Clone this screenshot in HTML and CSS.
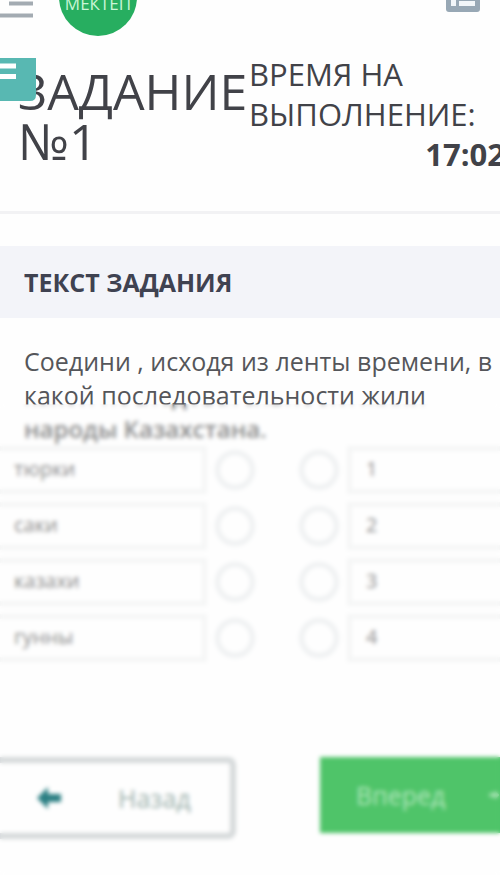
FILE: index.html
```html
<!DOCTYPE html>
<html lang="ru">
<head>
  <meta charset="UTF-8">
  <meta name="viewport" content="width=device-width, initial-scale=1">
  <title>Задание №1</title>
  <link rel="stylesheet" href="styles.css">
</head>
<body>
  <header class="topbar">
    <button class="icon-btn menu-btn" type="button" aria-label="Меню">
      <svg width="34" height="18" viewBox="0 0 34 18">
        <path d="M9 3.500H33M0 15.500H33" stroke="#a3abb2" stroke-width="4"/>
      </svg>
    </button>
    <a class="logo" href="#">МЕКТЕП</a>
    <button class="icon-btn list-btn" type="button" aria-label="Список заданий">
      <svg width="34" height="26" viewBox="0 0 34 26">
        <rect width="34" height="26" rx="3" fill="#98a8b5"/>
        <path d="M5 7H10V20H5zM13 7H29V12H13zM13 15H29V20H13z" fill="#f2f6f9"/>
      </svg>
    </button>
  </header>

  <main>
    <section class="task-head">
      <button class="side-tab" type="button" aria-label="Открыть панель">
        <svg width="36" height="44" viewBox="0 0 36 44">
          <path d="M0 0H36V37Q36 43 30 43H0z" fill="#58b8b2"/>
          <path d="M0 8H16M0 18.500H16" stroke="#fff" stroke-width="5"/>
        </svg>
      </button>
      <h1 class="task-title">ЗАДАНИЕ №1</h1>
      <div class="timer">
        <span class="timer-label">ВРЕМЯ НА ВЫПОЛНЕНИЕ:</span>
        <strong class="timer-value">17:02</strong>
      </div>
    </section>

    <h2 class="section-title">ТЕКСТ ЗАДАНИЯ</h2>
    <p class="question">Соедини , исходя из ленты времени, в какой последовательности жили <span class="last-line">народы Казахстана.</span></p>

    <section class="hidden-area">
      <div class="pairs">
        <div class="pair">
          <label class="option" for="l1">тюрки</label>
          <input type="radio" id="l1" name="left">
          <input type="radio" id="r1" name="right">
          <label class="option option-right" for="r1">1</label>
        </div>
        <div class="pair">
          <label class="option" for="l2">саки</label>
          <input type="radio" id="l2" name="left">
          <input type="radio" id="r2" name="right">
          <label class="option option-right" for="r2">2</label>
        </div>
        <div class="pair">
          <label class="option" for="l3">казахи</label>
          <input type="radio" id="l3" name="left">
          <input type="radio" id="r3" name="right">
          <label class="option option-right" for="r3">3</label>
        </div>
        <div class="pair">
          <label class="option" for="l4">гунны</label>
          <input type="radio" id="l4" name="left">
          <input type="radio" id="r4" name="right">
          <label class="option option-right" for="r4">4</label>
        </div>
      </div>

      <div class="actions">
        <button class="btn btn-back" type="button">
          <svg width="26" height="24" viewBox="0 0 26 24">
            <path d="M1 12L12 1V8H25V16H12V23z" fill="#2b7f83"/>
          </svg>
          <span>Назад</span>
        </button>
        <button class="btn btn-next" type="button">
          <span>Вперед</span>
          <svg width="26" height="24" viewBox="0 0 26 24">
            <path d="M25 12L14 1V8H1V16H14V23z" fill="#b0e6bb"/>
          </svg>
        </button>
      </div>
      <div class="veil"></div>
    </section>
  </main>
</body>
</html>
```
FILE: styles.css
```css
* {
  box-sizing: border-box;
}
body {
  margin: 0;
  font-family: "Open Sans", "Noto Sans", sans-serif;
  background-color: #fefefe;
  color: #414248;
  overflow-x: hidden;
}
button {
  font-family: inherit;
  cursor: pointer;
}
svg {
  display: block;
}

/* top bar */
.topbar {
  display: flex;
  align-items: flex-start;
  height: 48px;
  padding-right: 20px;
  overflow: hidden;
}
.icon-btn {
  border: 0;
  padding: 0;
  background: none;
}
.logo {
  display: flex;
  align-items: center;
  justify-content: center;
  width: 78px;
  height: 78px;
  margin-top: -42px;
  margin-left: 25px;
  padding-top: 14px;
  border-radius: 50%;
  background-color: #27ae60;
  color: #c9f5d6;
  font-size: 17px;
  line-height: 16px;
  text-decoration: none;
}
.list-btn {
  margin-top: -14px;
  margin-left: auto;
}

/* task header */
.task-head {
  position: relative;
  display: flex;
  align-items: flex-start;
  min-height: 166px;
  padding: 6px 0 0 18px;
  border-bottom: 3px solid #f2f2f4;
}
.side-tab {
  position: absolute;
  top: 10px;
  left: 0;
  z-index: 1;
  border: 0;
  padding: 0;
  background: none;
}
.task-title {
  width: 231px;
  flex: none;
  margin: 12px 0 0;
  font-size: 50px;
  line-height: 50px;
  font-weight: 400;
}
.timer {
  flex: none;
  width: 256px;
  font-size: 31px;
  line-height: 40px;
}
.timer-label {
  display: block;
}
.timer-value {
  display: block;
  text-align: right;
}

/* question */
.section-title {
  margin: 32px 0 0;
  padding: 18px 24px;
  background-color: #f3f4f9;
  color: #3f4251;
  font-size: 25px;
  line-height: 36px;
  font-weight: 700;
}
.question {
  margin: 26px 0 0;
  padding-left: 24px;
  font-size: 25px;
  line-height: 34px;
  color: #55565a;
}
.last-line {
  display: block;
  font-size: 24px;
  font-weight: 600;
  color: #8a8a8a;
}

/* pairs */
.hidden-area {
  position: relative;
}
.pairs {
  display: grid;
  gap: 8px;
}
.pair {
  display: grid;
  grid-template-columns: 207px 76px 40px 1fr;
  column-gap: 8px;
  align-items: center;
}
.option {
  height: 48px;
  padding: 0 14px;
  border: 5px solid #f5f6f6;
  border-left: 0;
  font-size: 20px;
  line-height: 36px;
  color: #8c8c8c;
}
.option-right {
  border-left: 5px solid #f5f6f6;
  border-right: 0;
}
.pair input {
  appearance: none;
  width: 40px;
  height: 40px;
  margin: 0;
  border: 5px solid #eff1f2;
  border-radius: 50%;
}

/* buttons */
.actions {
  display: flex;
  justify-content: space-between;
  margin-top: 95px;
  padding-bottom: 36px;
}
.btn {
  display: flex;
  align-items: center;
  height: 82px;
  border: 6px solid #d5d9da;
  font-size: 25px;
}
.btn-back {
  width: 236px;
  gap: 56px;
  padding: 0 0 0 36px;
  border-left: 0;
  border-radius: 0 8px 8px 0;
  background-color: #fefefe;
  color: #9db1ad;
}
.btn-next {
  width: 180px;
  height: 76px;
  gap: 44px;
  padding: 0 0 0 36px;
  border: 0;
  background-color: #4fc469;
  color: #b0e6bb;
}

/* veil over the answers */
.veil {
  position: absolute;
  inset: -42px 0 0;
  backdrop-filter: blur(2px);
  pointer-events: none;
}
```
